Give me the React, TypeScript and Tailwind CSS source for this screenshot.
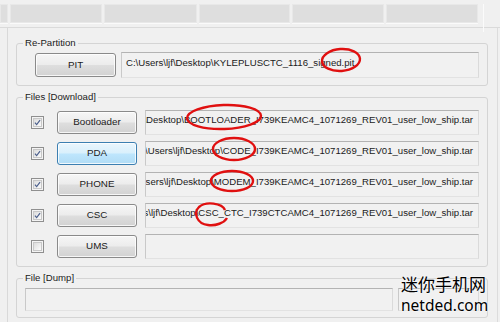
import React from "react";

const btnBase =
  "h-[23px] w-[80px] shrink-0 rounded-[3px] border flex items-center justify-center text-[9.8px] text-[#1b1b1b] shadow-[inset_0_0_0_1px_rgba(255,255,255,0.8)]";
const btnNormal =
  "border-[#8a8a8a] bg-[linear-gradient(to_bottom,#f6f6f6_0%,#ececec_48%,#dedede_52%,#d2d2d2_100%)]";
const btnHot =
  "border-[#3c7fb1] bg-[linear-gradient(to_bottom,#eaf6fd_0%,#d9f0fc_48%,#bee6fd_52%,#b1dcf5_100%)]";

const fieldCls =
  "border border-t-[#b3b3b3] border-l-[#c9c9c9] border-r-[#dadada] border-b-[#e2e2e2] bg-[#f1f1f1]";

function Check({ checked }: { checked: boolean }) {
  return (
    <div className="w-[13px] h-[13px] shrink-0 border border-[#8f8f8f] bg-[#f4f4f4] p-[1px]">
      <div className="w-full h-full border border-[#c8c8c8] bg-[linear-gradient(to_bottom_right,#dcdcdc,#fbfbfb)] flex items-center justify-center">
        {checked && (
          <svg width="9" height="9" viewBox="0 0 9 9">
            <path d="M1.2 4.6 L3.4 7.2 L7.8 1.4" fill="none" stroke="#4b5f8c" strokeWidth="1.5" />
          </svg>
        )}
      </div>
    </div>
  );
}

const rows = [
  { label: "Bootloader", path: "C:\\Users\\ljf\\Desktop\\BOOTLOADER_I739KEAMC4_1071269_REV01_user_low_ship.tar", checked: true, hot: false },
  { label: "PDA", path: "C:\\Users\\ljf\\Desktop\\CODE_I739KEAMC4_1071269_REV01_user_low_ship.tar", checked: true, hot: true },
  { label: "PHONE", path: "C:\\Users\\ljf\\Desktop\\MODEM_I739KEAMC4_1071269_REV01_user_low_ship.tar", checked: true, hot: false },
  { label: "CSC", path: "C:\\Users\\ljf\\Desktop\\CSC_CTC_I739CTCAMC4_1071269_REV01_user_low_ship.tar", checked: true, hot: false },
  { label: "UMS", path: "", checked: false, hot: false },
];

export default function App() {
  return (
    <div className="relative w-[500px] h-[322px] overflow-hidden bg-[#f0f0f0] font-['Liberation_Sans',Arial,sans-serif] text-[#1b1b1b]">
      {/* top strip */}
      <div className="h-[28px] flex items-start pt-[4px] gap-[2px] border-b border-[#dadada]">
        {[8, 92, 93, 91, 92, 92].map((w, i) => (
          <div
            key={i}
            style={{ width: w }}
            className="h-[19px] shrink-0 bg-[#dedede] border border-[#e8e8e8] shadow-[0_1px_0_#fafafa]"
          />
        ))}
        <div className="ml-[3px] h-[28px] border-l border-[#fbfbfb]" />
      </div>

      <div className="flex h-[294px]">
        <div className="w-[8px] shrink-0 border-r border-[#d9d9d9]" />
        <div className="w-[8px] shrink-0" />
        <div className="w-[472px] shrink-0 flex flex-col">
          {/* Re-Partition */}
          <fieldset className="mt-[9px] border border-[#d4d4d4] rounded-[3px] pt-[3px] pb-[7px] min-w-0">
            <legend className="ml-[6px] px-[2px] text-[9.6px] leading-[12px]">Re-Partition</legend>
            <div className="flex items-center pl-[18px] pr-[8px]">
              <div className={`${btnBase} ${btnNormal} w-[81px] h-[24px]`}>PIT</div>
              <div className={`${fieldCls} ml-[5px] flex-1 min-w-0 h-[26px] pl-[4px] pt-[4px] text-[9.6px] leading-[12px] whitespace-nowrap overflow-hidden`}>
                C:\Users\ljf\Desktop\KYLEPLUSCTC_1116_signed.pit
              </div>
            </div>
          </fieldset>

          {/* Files [Download] */}
          <fieldset className="mt-[5px] border border-[#d4d4d4] rounded-[3px] pt-[4px] pb-[4px] min-w-0">
            <legend className="ml-[6px] px-[2px] text-[9.6px] leading-[12px]">Files [Download]</legend>
            <div className="pl-[14px] pr-[8px]">
              {rows.map((r) => (
                <div key={r.label} className="h-[31px] flex items-center min-w-0">
                  <Check checked={r.checked} />
                  <div className={`${btnBase} ${r.hot ? btnHot : btnNormal} ml-[13px]`}>{r.label}</div>
                  <div className={`${fieldCls} ml-[8px] flex-1 min-w-0 w-0 h-[25px] flex justify-end overflow-hidden whitespace-nowrap pr-[5px] pt-[3px] text-[9.6px] leading-[12px]`}>
                    <span className="shrink-0">{r.path}</span>
                  </div>
                </div>
              ))}
            </div>
          </fieldset>

          {/* File [Dump] */}
          <fieldset className="mt-[5px] border border-[#d4d4d4] rounded-[3px] pt-[4px] pb-[6px] min-w-0">
            <legend className="ml-[6px] px-[2px] text-[9.6px] leading-[12px]">File [Dump]</legend>
            <div className="flex pl-[8px] pr-[8px]">
              <div className={`${fieldCls} w-[368px] h-[23px]`} />
              <div className={`${fieldCls} ml-[5px] flex-1 h-[23px]`} />
            </div>
          </fieldset>
        </div>
        <div className="w-[9px] shrink-0" />
        <div className="flex-1 border-l border-[#dcdcdc]" />
      </div>

      {/* red hand-drawn annotations */}
      <svg className="absolute inset-0 pointer-events-none" width="500" height="322" viewBox="0 0 500 322">
        <g fill="none" stroke="#e01010" strokeWidth="2.4">
          <ellipse cx="341" cy="60" rx="19" ry="11" transform="rotate(-4 341 60)" />
          <ellipse cx="224" cy="117" rx="37" ry="12" transform="rotate(-2 224 117)" />
          <ellipse cx="234" cy="149" rx="21" ry="11" />
          <ellipse cx="232" cy="181" rx="21" ry="10" />
          <path d="M225 210 C222 203 206 201 199 207 C193 213 197 224 208 225 C216 226 224 223 227 218" />
        </g>
      </svg>

      {/* watermark */}
      <div className="absolute left-[401px] top-[273px] text-black [text-shadow:0_0_2px_#fff,0_0_2px_#fff]">
        <div className="font-['Noto_Sans_CJK_SC',sans-serif] text-[17px] leading-[22px]">迷你手机网</div>
        <div className="font-['Noto_Sans',sans-serif] text-[15.5px] leading-[20px]">netded.com</div>
      </div>
    </div>
  );
}
